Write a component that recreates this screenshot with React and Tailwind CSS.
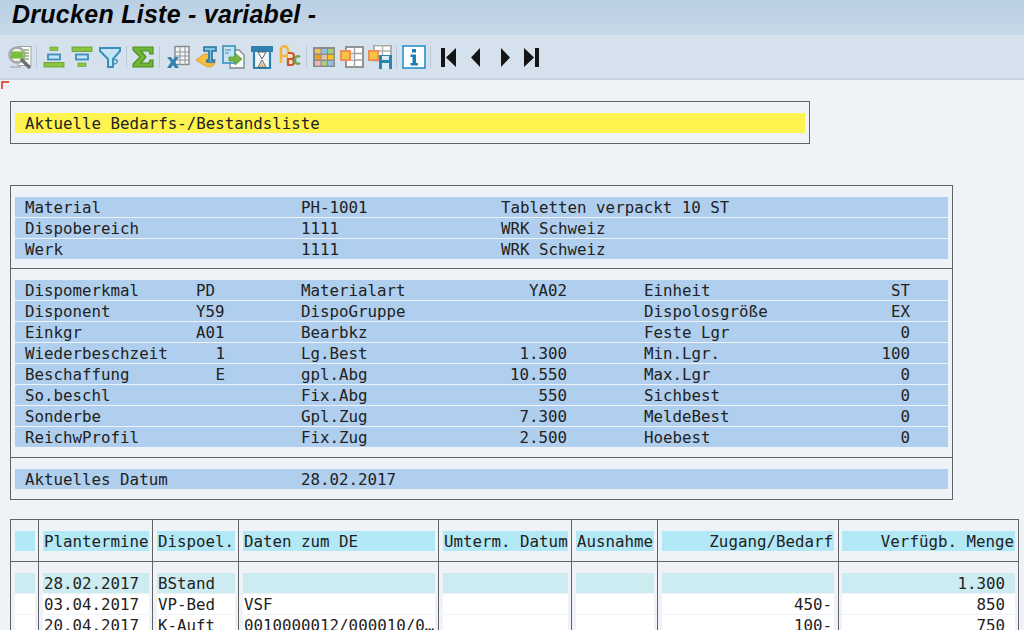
import React from "react";

const Sep = () => <div className="w-px h-[22px] bg-[#bccbd9] mx-[4px]" />;

const Ico = ({ className = "", children, w = 24 }) => (
  <svg width={w} height="24" viewBox={`0 0 ${w} 24`} className={"shrink-0 " + className}>{children}</svg>
);

const G = "#8cc43f";
const GD = "#5f9e2e";
const B = "#3a90bd";
const BL = "#c5e3f3";

const Toolbar = () => (
  <div className="h-[45px] flex items-center pl-[8px] pt-[1px] bg-[#d5e1ec] border-b-2 border-[#c5d3e0]">
    <Ico>
      <rect x="10" y="1.500" width="13" height="19" fill="#fff" stroke="#9aa3a8" />
      <path d="M16 5h5M16 8h5M16 11h5M16 14h5" stroke="#8fae6a" strokeWidth="1.400" />
      <circle cx="9" cy="10" r="7.500" fill="#eef3ea" stroke="#a3a8a8" strokeWidth="2.400" />
      <rect x="3" y="6.500" width="12" height="7" fill="#75bd3a" />
      <path d="M14 15l7 7" stroke="#707070" strokeWidth="3.500" strokeLinecap="round" />
      <path d="M2 22h11" stroke="#b0b0b0" strokeWidth="1.500" />
    </Ico>
    <Sep />
    <Ico className="ml-[1px]">
      <rect x="8" y="2" width="8" height="3.500" fill={G} stroke={GD} strokeWidth="0.6" />
      <rect x="6" y="9.500" width="12" height="5" fill={BL} stroke={B} strokeWidth="1.800" />
      <rect x="2" y="17.500" width="20" height="4.500" fill={G} stroke={GD} strokeWidth="0.8" />
    </Ico>
    <Ico className="ml-[4px]">
      <rect x="2" y="2" width="20" height="4.500" fill={G} stroke={GD} strokeWidth="0.8" />
      <rect x="6" y="9.500" width="12" height="5" fill={BL} stroke={B} strokeWidth="1.800" />
      <rect x="8" y="18" width="8" height="3.500" fill={G} stroke={GD} strokeWidth="0.6" />
    </Ico>
    <Ico className="ml-[4px]">
      <path d="M2 3h20v3l-7 8v8h-5v-8L2 6z" fill={BL} stroke={B} strokeWidth="2" />
      <path d="M16 15c4-2 5 3 0 4" fill="none" stroke={B} strokeWidth="1.300" />
    </Ico>
    <Sep />
    <Ico>
      <path d="M2 2h20v7h-3l-1-3H10l5 6-5 6h8l1-3h3v7H2v-3l7-7-7-7z" fill="#6fb536" stroke="#4e8f22" strokeWidth="1.200" />
    </Ico>
    <Sep />
    <Ico className="ml-[2px]">
      <rect x="9" y="1.500" width="14" height="18" fill="#f2f4f5" stroke="#868b8e" strokeWidth="1.400" />
      <path d="M9 7h14M9 11h14M9 15h14M14 2v17M19 2v17" stroke="#868b8e" strokeWidth="0.9" />
      <path d="M1 12l4 0 2 3 2-3 4 0-4 5 4 6H9l-2-3-2 3H1l4-6z" fill="#2f82ad" />
    </Ico>
    <Ico className="ml-[5px]">
      <path d="M1 15l8-6h5v9c3 2 6 0 6-4 1 6-2 8-7 8l-6-3z" fill="#f7bd3c" stroke="#d9941f" strokeWidth="0.8" />
      <path d="M9 2h12v4h-4v9h2v2h-7v-2h2V6h-5z" fill="#7fc3e4" stroke="#24759f" strokeWidth="1.600" />
    </Ico>
    <Ico className="ml-[3px]">
      <path d="M8 5h9l5 5v13H8z" fill="#fafbfb" stroke="#7f878d" strokeWidth="1.300" />
      <rect x="1" y="1" width="12" height="17" fill={BL} stroke={B} strokeWidth="1.600" />
      <path d="M3 5h6M3 8h4" stroke={B} strokeWidth="1.200" />
      <path d="M7 12h6V8l7 6-7 6v-4H7z" fill="#74b63e" stroke="#4e8f22" strokeWidth="0.7" />
    </Ico>
    <Ico className="ml-[4px]">
      <rect x="1" y="1" width="22" height="6" fill="#2f82ad" />
      <path d="M4 6h16v17H4z" fill="#eef6fb" stroke="#2f82ad" strokeWidth="2.200" />
      <path d="M8 7h8l-4 7zM8 22l4-7 4 7z" fill="#fff" stroke="#555" strokeWidth="0.9" />
      <path d="M9.500 21l2.500-4 2.500 4z" fill="#e9b87a" />
    </Ico>
    <Ico className="ml-[4px]">
      <path d="M3 18V5c0-5 7-5 7 0v13M3 11h7" fill="none" stroke="#f3b53a" strokeWidth="2.600" />
      <path d="M10 8h3c4 0 4 6 0 6h-3M10 14h3c4 0 4 6 0 6h-3z" fill="#f6e3d6" stroke="#c8552e" strokeWidth="2.200" />
      <path d="M22 12c-3-2-5 0-5 3s2 5 5 3" fill="none" stroke="#6aa84f" strokeWidth="2.400" />
    </Ico>
    <Sep />
    <Ico className="ml-[1px]">
      <rect x="1" y="2" width="22" height="20" fill="#8c8c8c" />
      <rect x="3" y="4" width="5.500" height="4.500" fill="#f5c255" />
      <rect x="9.500" y="4" width="5.500" height="4.500" fill="#8fc1e3" />
      <rect x="16" y="4" width="5.500" height="4.500" fill="#a9cf7e" />
      <rect x="3" y="10" width="5.500" height="4.500" fill="#f0a020" />
      <rect x="9.500" y="10" width="5.500" height="4.500" fill="#e3c1a8" />
      <rect x="16" y="10" width="5.500" height="4.500" fill="#f6c717" />
      <rect x="3" y="16" width="5.500" height="4.500" fill="#eeb8bd" />
      <rect x="9.500" y="16" width="5.500" height="4.500" fill="#a9cf7e" />
      <rect x="16" y="16" width="5.500" height="4.500" fill="#8fc1e3" />
    </Ico>
    <Ico className="ml-[4px]">
      <rect x="6" y="2" width="17" height="20" fill="#fff" stroke="#8a8a8a" strokeWidth="1.800" />
      <path d="M6 8.500h17M6 15h17M14.500 2v20" stroke="#a0a0a0" strokeWidth="1.400" />
      <rect x="8" y="9" width="6" height="6" fill="#dbe6ef" />
      <rect x="1" y="6" width="9" height="9" fill="#f7c445" stroke="#ee8f58" strokeWidth="2" />
    </Ico>
    <Ico className="ml-[4px]">
      <rect x="6" y="0.500" width="17" height="15" fill="#fff" stroke="#a8a8a8" strokeWidth="1.800" />
      <path d="M6 6h17M14.500 0v15" stroke="#b0b0b0" strokeWidth="1.400" />
      <rect x="1" y="6" width="9" height="9" fill="#f7c445" stroke="#ee8f58" strokeWidth="2" />
      <rect x="11" y="10" width="13" height="14" fill="#2c83b0" />
      <rect x="14" y="11" width="7" height="4" fill="#dcecf5" />
      <rect x="14" y="18" width="7" height="6" fill="#dcecf5" />
    </Ico>
    <Sep />
    <Ico className="ml-[1px]">
      <rect x="1" y="1" width="22" height="22" fill="#fff" stroke="#3c9cd0" strokeWidth="1.800" />
      <rect x="10" y="4" width="4" height="3.500" fill="#1f7fb2" />
      <path d="M8.500 9.500H14V18h2v2.500H8.500V18H10.500v-6H8.500z" fill="#1f7fb2" />
    </Ico>
    <Sep />
    <Ico className="ml-[3px]" w={22}>
      <rect x="3" y="3" width="4" height="19" fill="#151515" />
      <path d="M18 3v19L8 12.500z" fill="#151515" />
    </Ico>
    <Ico className="ml-[5px]" w={22}>
      <path d="M15 3v19L6 12.500z" fill="#151515" />
    </Ico>
    <Ico className="ml-[7px]" w={22}>
      <path d="M7 3v19l9-9.500z" fill="#151515" />
    </Ico>
    <Ico className="ml-[4px]" w={22}>
      <path d="M4 3v19l10-9.500z" fill="#151515" />
      <rect x="15" y="3" width="4" height="19" fill="#151515" />
    </Ico>
  </div>
);

const Bar = ({ children, cols = "" }) => (
  <div className={"h-5 bg-[#b0cfee] grid pl-[10px] leading-[21px] " + cols}>{children}</div>
);

const Frame = ({ className = "", children }) => (
  <div className={"border border-[#5f6367] " + className}>{children}</div>
);

const topCols = "grid-cols-[276px_200px_1fr]";

const mid = [
  ["Dispomerkmal", "PD", "Materialart", "YA02", "Einheit", "ST"],
  ["Disponent", "Y59", "DispoGruppe", "", "Dispolosgröße", "EX"],
  ["Einkgr", "A01", "Bearbkz", "", "Feste Lgr", "0"],
  ["Wiederbeschzeit", "1", "Lg.Best", "1.300", "Min.Lgr.", "100"],
  ["Beschaffung", "E", "gpl.Abg", "10.550", "Max.Lgr", "0"],
  ["So.beschl", "", "Fix.Abg", "550", "Sichbest", "0"],
  ["Sonderbe", "", "Gpl.Zug", "7.300", "MeldeBest", "0"],
  ["ReichwProfil", "", "Fix.Zug", "2.500", "Hoebest", "0"],
];

const MidRow = ({ r }) => (
  <div className="h-5 bg-[#b0cfee] flex pl-[10px] leading-[21px]">
    <span className="w-[171px]">{r[0]}</span>
    <span className={"w-[29px] mr-[76px] " + (r[1] === "1" || r[1] === "E" ? "text-right" : "")}>{r[1]}</span>
    <span className="w-[105px]">{r[2]}</span>
    <span className="w-[161px] mr-[77px] text-right">{r[3]}</span>
    <span className="w-[170px]">{r[4]}</span>
    <span className="w-[96px] text-right">{r[5]}</span>
  </div>
);

const tCols = "grid grid-cols-[20px_106px_78px_192px_125px_78px_172px_173px] gap-x-2";
const Cell = ({ c = "", children }) => <div className={"h-5 leading-[21px] " + c}>{children}</div>;

const heads = [
  ["", ""],
  ["Plantermine", "pl-[1px]"],
  ["Dispoel.", "pl-[1px]"],
  ["Daten zum DE", "pl-[1px]"],
  ["Umterm. Datum", "pl-[1px]"],
  ["Ausnahme", "pl-[1px]"],
  ["Zugang/Bedarf", "text-right pr-[1px]"],
  ["Verfügb. Menge", "text-right pr-[1px]"],
];

const rows = [
  ["", "28.02.2017", "BStand", "", "", "", "", "1.300"],
  ["", "03.04.2017", "VP-Bed", "VSF", "", "", "450-", "850"],
  ["", "20.04.2017", "K-Auft", "0010000012/000010/0…", "", "", "100-", "750"],
];

const VLines = () => (
  <div className="absolute inset-0 pointer-events-none">
    {[27, 141, 227, 427, 560, 646, 827].map((x) => (
      <div key={x} className="absolute top-0 bottom-0 w-px bg-[#5f6367]" style={{ left: x }} />
    ))}
  </div>
);

export default function App() {
  return (
    <div
      className="w-[1024px] h-[630px] overflow-hidden bg-[#eff3f8] text-[#222222] text-[15.8px]"
      style={{ fontFamily: '"DejaVu Sans Mono", "Liberation Mono", monospace' }}
    >
      <div className="h-[35px] bg-gradient-to-b from-[#b9cfe3] to-[#c8d9e9] pl-[12px] leading-[28px] text-[#050505] text-[25px] font-bold italic whitespace-pre" style={{ fontFamily: '"Liberation Sans", Arial, sans-serif', letterSpacing: "0.27px" }}>
        Drucken Liste - variabel -
      </div>
      <Toolbar />
      <div className="relative h-0">
        <div className="absolute left-[1px] top-[1px] w-[8px] h-[8px] border-l-2 border-t-2 border-[#e8583f]" />
      </div>
      <div className="pl-[10px]">
        <Frame className="mt-[21px] w-[800px] h-[43px] px-[4px] pt-[11px]">
          <div className="h-5 bg-[#fff44f] pl-[10px] leading-[21px] whitespace-pre">Aktuelle Bedarfs-/Bestandsliste</div>
        </Frame>
        <Frame className="mt-[41px] w-[943px] px-[4px] pt-[11px] pb-[10px] whitespace-pre">
          <div className="flex flex-col gap-px">
            <Bar cols={topCols}><span>Material</span><span>PH-1001</span><span>Tabletten verpackt 10 ST</span></Bar>
            <Bar cols={topCols}><span>Dispobereich</span><span>1111</span><span>WRK Schweiz</span></Bar>
            <Bar cols={topCols}><span>Werk</span><span>1111</span><span>WRK Schweiz</span></Bar>
          </div>
          <div className="h-px bg-[#5f6367] -mx-[4px] mt-[9px] mb-[11px]" />
          <div className="flex flex-col gap-px">
            {mid.map((r) => <MidRow key={r[0]} r={r} />)}
          </div>
          <div className="h-px bg-[#5f6367] -mx-[4px] mt-[10px] mb-[11px]" />
          <Bar cols={topCols}><span>Aktuelles Datum</span><span>28.02.2017</span><span /></Bar>
        </Frame>
        <div className="relative mt-[19px] w-[1009px] border border-[#5f6367] whitespace-pre">
          <VLines />
          <div className={tCols + " pl-[4px] pt-[11px] pb-[10px] border-b border-[#5f6367]"}>
            {heads.map(([t, c], i) => <Cell key={i} c={"bg-[#b3e8f6] " + c}>{t}</Cell>)}
          </div>
          <div className="pt-[11px]">
            {rows.map((r, ri) => (
              <div key={ri} className={tCols + " pl-[4px] mb-px"}>
                {r.map((t, i) => (
                  <Cell key={i} c={(ri === 0 ? "bg-[#cdecf1] " : "bg-white ") + (i === 6 ? "text-right pr-[2px] " : "") + (i === 7 ? "text-right pr-[10px] " : "") + (i >= 1 && i < 6 ? "pl-[1px]" : "")}>{t}</Cell>
                ))}
              </div>
            ))}
          </div>
        </div>
      </div>
    </div>
  );
}
